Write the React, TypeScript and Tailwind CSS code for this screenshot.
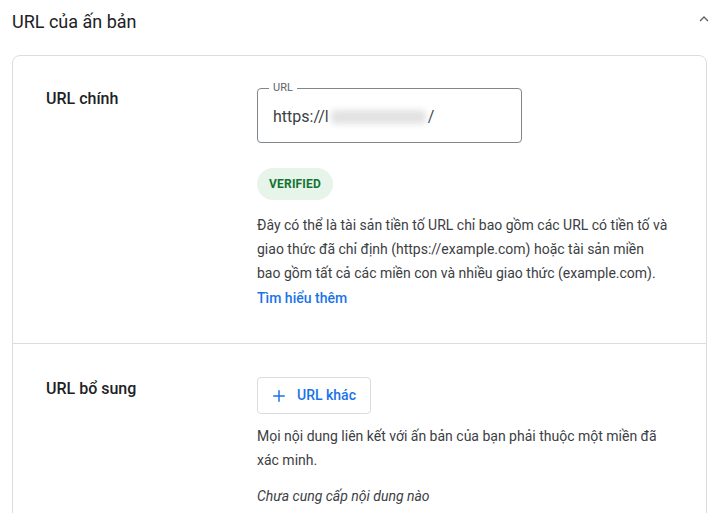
import { Plus } from "lucide-react";

export default function App() {
  return (
    <div className="h-[513px] w-[720px] overflow-hidden bg-white font-['Roboto',_'Liberation_Sans',_sans-serif] text-[#202124]">
      <div className="flex h-[42px] items-center justify-between pl-[12px] pr-[10px]">
        <h1 className="text-[18px] font-normal text-[#202124]">URL của ấn bản</h1>
        <svg width="12" height="12" viewBox="0 0 12 12" className="mb-[5px]">
          <path d="M2 8 L6 4 L10 8" fill="none" stroke="#5f6368" strokeWidth="1.4" />
        </svg>
      </div>

      <div className="ml-[12px] mt-[13px] w-[695px] rounded-[8px] border border-[#dadce0]">
        <section className="flex pb-[32px] pl-[33px] pt-[32px]">
          <div className="w-[211px] pt-[1px] text-[16px] font-medium leading-[20px]">URL chính</div>
          <div className="w-[412px]">
            <div className="relative flex h-[55px] w-[265px] items-center rounded-[4px] border border-[#80868b] px-[15px] pt-[2px] text-[16px] text-[#3c4043]">
              <span className="absolute left-[11px] top-[-8px] bg-white px-[4px] text-[11px] leading-[14px] text-[#5f6368]">
                URL
              </span>
              <span>https://l</span>
              <span className="mx-[2px] inline-block h-[14px] w-[95px] rounded-sm bg-[#e2e2e2] blur-[3px]" />
              <span>/</span>
            </div>
            <div className="mt-[25px] inline-flex h-[32px] items-center rounded-full bg-[#e6f4ea] px-[12px] text-[12px] font-bold tracking-[0.2px] text-[#137333]">
              VERIFIED
            </div>
            <p className="mt-[13px] text-[14px] leading-[24px] text-[#3c4043]">
              Đây có thể là tài sản tiền tố URL chỉ bao gồm các URL có tiền tố và giao thức đã chỉ định
              (https://example.com) hoặc tài sản miền bao gồm tất cả các miền con và nhiều giao thức
              (example.com).
            </p>
            <a className="block text-[14px] font-medium leading-[26px] text-[#1a73e8]">Tìm hiểu thêm</a>
          </div>
        </section>

        <div className="h-px bg-[#dadce0]" />

        <section className="flex pb-[40px] pl-[33px] pt-[33px]">
          <div className="w-[211px] pt-[2px] text-[16px] font-medium leading-[20px]">URL bổ sung</div>
          <div className="w-[412px]">
            <button className="flex h-[37px] items-center gap-[9px] rounded-[4px] border border-[#dadce0] pl-[12px] pr-[14px] text-[14px] font-medium text-[#1a73e8]">
              <Plus size={18} strokeWidth={2} />
              URL khác
            </button>
            <p className="mt-[10px] text-[14px] leading-[24px] text-[#3c4043]">
              Mọi nội dung liên kết với ấn bản của bạn phải thuộc một miền đã xác minh.
            </p>
            <p className="mt-[12px] text-[14px] italic leading-[24px] text-[#3c4043]">Chưa cung cấp nội dung nào</p>
          </div>
        </section>
      </div>
    </div>
  );
}
